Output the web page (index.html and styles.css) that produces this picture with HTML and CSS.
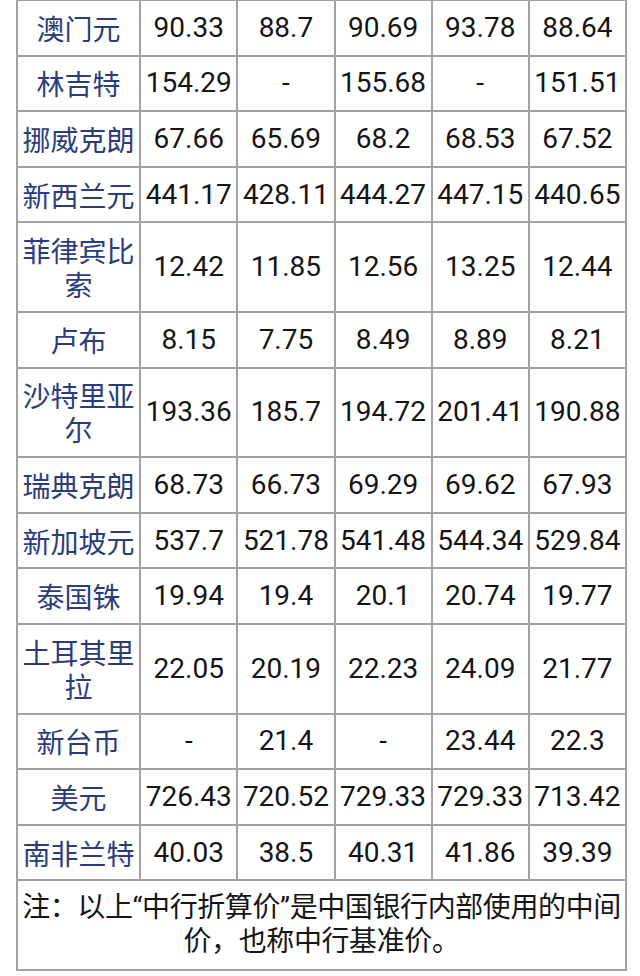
FILE: index.html
```html
<!DOCTYPE html>
<html lang="zh-CN">
<head>
<meta charset="utf-8">
<link rel="stylesheet" href="styles.css">
</head>
<body>
<table class="rates">
  <colgroup>
    <col class="c-name"><col class="c-num"><col class="c-num"><col class="c-num"><col class="c-num"><col class="c-num">
  </colgroup>
  <tbody>
    <tr><td class="name">澳门元</td><td>90.33</td><td>88.7</td><td>90.69</td><td>93.78</td><td>88.64</td></tr>
    <tr><td class="name">林吉特</td><td>154.29</td><td>-</td><td>155.68</td><td>-</td><td>151.51</td></tr>
    <tr><td class="name">挪威克朗</td><td>67.66</td><td>65.69</td><td>68.2</td><td>68.53</td><td>67.52</td></tr>
    <tr><td class="name">新西兰元</td><td>441.17</td><td>428.11</td><td>444.27</td><td>447.15</td><td>440.65</td></tr>
    <tr><td class="name">菲律宾比索</td><td>12.42</td><td>11.85</td><td>12.56</td><td>13.25</td><td>12.44</td></tr>
    <tr><td class="name">卢布</td><td>8.15</td><td>7.75</td><td>8.49</td><td>8.89</td><td>8.21</td></tr>
    <tr><td class="name">沙特里亚尔</td><td>193.36</td><td>185.7</td><td>194.72</td><td>201.41</td><td>190.88</td></tr>
    <tr><td class="name">瑞典克朗</td><td>68.73</td><td>66.73</td><td>69.29</td><td>69.62</td><td>67.93</td></tr>
    <tr><td class="name">新加坡元</td><td>537.7</td><td>521.78</td><td>541.48</td><td>544.34</td><td>529.84</td></tr>
    <tr><td class="name">泰国铢</td><td>19.94</td><td>19.4</td><td>20.1</td><td>20.74</td><td>19.77</td></tr>
    <tr><td class="name">土耳其里拉</td><td>22.05</td><td>20.19</td><td>22.23</td><td>24.09</td><td>21.77</td></tr>
    <tr><td class="name">新台币</td><td>-</td><td>21.4</td><td>-</td><td>23.44</td><td>22.3</td></tr>
    <tr><td class="name">美元</td><td>726.43</td><td>720.52</td><td>729.33</td><td>729.33</td><td>713.42</td></tr>
    <tr><td class="name">南非兰特</td><td>40.03</td><td>38.5</td><td>40.31</td><td>41.86</td><td>39.39</td></tr>
    <tr><td class="note" colspan="6">注：以上“中行折算价”是中国银行内部使用的中间价，也称中行基准价。</td></tr>
  </tbody>
</table>
</body>
</html>
```

FILE: styles.css
```css
html, body {
  margin: 0;
  padding: 0;
  background: #ffffff;
}

body {
  font-family: Roboto, "Noto Sans CJK SC", sans-serif;
  font-size: 28px;
  line-height: 34px;
  color: #151515;
}

.rates {
  border-collapse: collapse;
  table-layout: fixed;
  width: 611px;
  margin: -1px 0 0 16px;
}

.c-name { width: 123px; }
.c-num { width: 97px; }

.rates td {
  border: 2px solid #a3a3a3;
  padding: 9.8px 3px;
  text-align: center;
  vertical-align: middle;
  white-space: normal;
  overflow: hidden;
}

.rates td.name {
  color: #2b3c7c;
  font-family: "Noto Sans CJK SC", sans-serif;
}

.rates td.note {
  color: #151515;
  padding: 9.8px 0;
  letter-spacing: -0.4px;
}
```
